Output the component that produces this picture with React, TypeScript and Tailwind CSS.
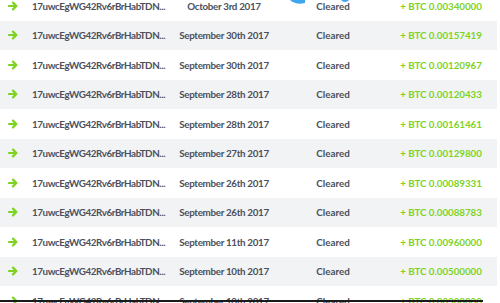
import React from "react";

const rows = [
  ["October 3rd 2017", "0.00340000"],
  ["September 30th 2017", "0.00157419"],
  ["September 30th 2017", "0.00120967"],
  ["September 28th 2017", "0.00120433"],
  ["September 28th 2017", "0.00161461"],
  ["September 27th 2017", "0.00129800"],
  ["September 26th 2017", "0.00089331"],
  ["September 26th 2017", "0.00088783"],
  ["September 11th 2017", "0.00960000"],
  ["September 10th 2017", "0.00500000"],
  ["September 10th 2017", "0.00300000"],
];

function Arrow() {
  return (
    <svg width="10" height="10" viewBox="0 0 10 10" fill="none">
      <path d="M1 5H8.2M5 1.6L8.4 5L5 8.4" stroke="#7ed321" strokeWidth="2.2" strokeLinecap="round" strokeLinejoin="round" />
    </svg>
  );
}

export default function App() {
  return (
    <div className="relative w-[500px] h-[303px] overflow-hidden bg-white" style={{ fontFamily: "Lato, 'Open Sans', sans-serif" }}>
      <div className="w-[497px] mt-[-8.8px] flex flex-col">
        {rows.map(([date, amt], i) => (
          <div key={i} className={`flex items-center h-[29.5px] shrink-0 whitespace-nowrap text-[9.8px] font-bold text-[#4b505c] ${i % 2 === 1 ? "bg-[#f2f3f5]" : "bg-white"}`}>
            <div className="w-[32px] shrink-0 pl-[8px] flex items-center"><Arrow /></div>
            <div className="w-[142px] shrink-0 tracking-[-0.4px]">17uwcEgWG42Rv6rBrHabTDN...</div>
            <div className="w-[100px] shrink-0 text-center tracking-[-0.3px]">{date}</div>
            <div className="w-[118px] shrink-0 text-center">Cleared</div>
            <div className="w-[98px] shrink-0 text-center text-[#7ed321] tracking-[-0.05px]">+ BTC {amt}</div>
          </div>
        ))}
      </div>
      <svg className="absolute left-[285px] top-0" width="70" height="8" viewBox="0 0 70 8">
        <path d="M3 -2 Q10 6 20 3 L20 -2 Z" fill="#3fa6ee" />
        <path d="M56 -2 Q60 3 64 -2" stroke="#3fa6ee" strokeWidth="3" fill="none" />
      </svg>
      <div className="absolute left-0 top-[300px] w-[483px] h-[2px] bg-[#1a1a1a]" />
    </div>
  );
}
